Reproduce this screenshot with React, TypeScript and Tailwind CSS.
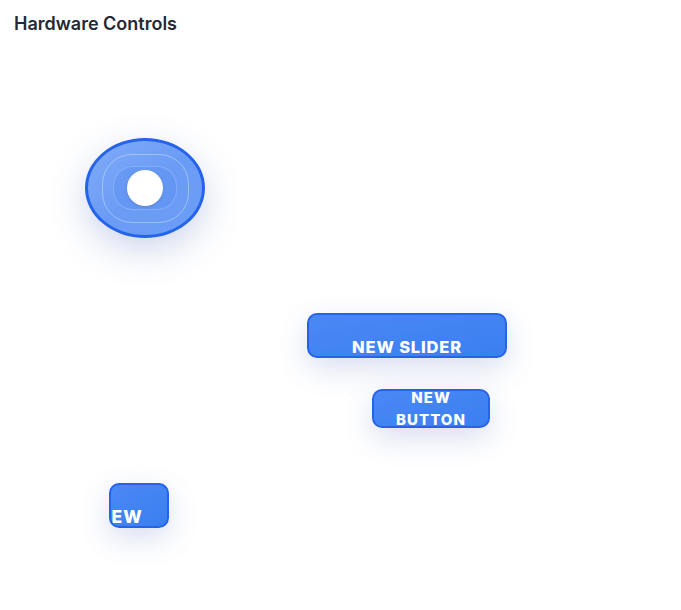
import { FC } from "react";

const font = { fontFamily: "Inter, 'Noto Sans', sans-serif" };

const Knob: FC = () => {
  return (
    <div className="absolute left-[85px] top-[138px] w-[120px] h-[100px] rounded-[50%] border-[3px] border-[#2563eb] bg-gradient-to-br from-[#80abf8] via-[#6b9cf5] to-[#6a9df7] shadow-[0_12px_36px_rgba(59,90,180,0.25)] flex items-center justify-center">
      <div className="w-[87px] h-[69px] rounded-[30px] border-[1.5px] border-white/35 flex items-center justify-center">
        <div className="w-[64px] h-[44px] rounded-[20px] border border-white/20 bg-[#5b8ff0]/40 flex items-center justify-center">
          <div className="w-[36px] h-[36px] rounded-full bg-white shadow-sm" />
        </div>
      </div>
    </div>
  );
};

const App: FC = () => {
  return (
    <div className="relative w-full h-[610px] bg-white overflow-hidden" style={font}>
      <div className="absolute left-[14px] top-[10px] text-[18px] leading-[27px] font-semibold text-[#252836]">
        Hardware Controls
      </div>

      <Knob />

      {/* slider */}
      <div className="absolute left-[307px] top-[313px] w-[200px] h-[45px] rounded-[10px] border-[2.5px] border-[#2563eb] bg-gradient-to-br from-[#4a88f5] to-[#3b7ff0] shadow-[0_10px_30px_rgba(59,90,180,0.2)] flex items-end justify-center overflow-hidden">
        <span className="text-white font-extrabold text-[16.5px] tracking-[0.05em] leading-[22px] -mb-[2px]">NEW SLIDER</span>
      </div>

      {/* button */}
      <div className="absolute left-[372px] top-[389px] w-[118px] h-[39px] rounded-[10px] border-[2.5px] border-[#2563eb] bg-gradient-to-br from-[#4a88f5] to-[#3b7ff0] shadow-[0_10px_30px_rgba(59,90,180,0.2)] flex items-center justify-center">
        <span className="text-white font-extrabold text-[15px] tracking-[0.07em] leading-[22px] text-center">
          NEW
          <br />
          BUTTON
        </span>
      </div>

      {/* small control */}
      <div className="absolute left-[109px] top-[483px] w-[60px] h-[45px] rounded-[10px] border-[2.5px] border-[#2563eb] bg-gradient-to-br from-[#4a88f5] to-[#3b7ff0] shadow-[0_10px_30px_rgba(59,90,180,0.2)] flex items-end overflow-hidden">
        <span className="text-white font-extrabold text-[17.5px] tracking-[0.06em] leading-[22px] whitespace-nowrap -ml-[14px] -mb-[2px]">NEW</span>
      </div>
    </div>
  );
};

export default App;
